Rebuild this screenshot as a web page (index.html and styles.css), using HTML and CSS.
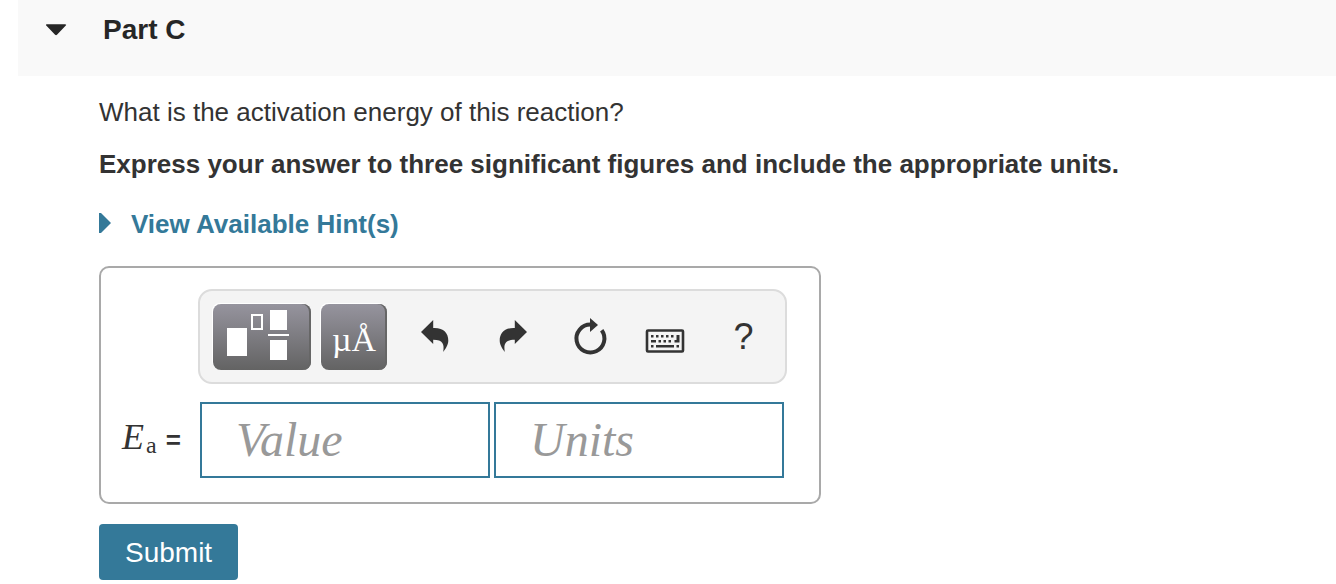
FILE: index.html
```html
<!DOCTYPE html>
<html lang="en">
<head>
    <meta charset="UTF-8">
    <meta name="viewport" content="width=device-width, initial-scale=1.0">
    <title>Part C</title>
    <link rel="stylesheet" href="styles.css">
</head>
<body>
    <header class="part-header">
        <svg class="arrow-down" viewBox="0 0 22 12" aria-hidden="true"><path d="M1 0H20Q22 0 20.500 1.500L11.500 11Q10.500 12 9.500 11L.5 1.500Q-1 0 1 0Z"/></svg>
        <h2>Part C</h2>
    </header>
    <main class="content">
        <p class="question">What is the activation energy of this reaction?</p>
        <p class="instructions">Express your answer to three significant figures and include the appropriate units.</p>
        <a class="hints" href="#">
            <svg class="arrow-right" viewBox="0 0 12 20" aria-hidden="true"><path d="M0 0H2L12 10L2 20H0Z"/></svg>
            View Available Hint(s)
        </a>

        <form id="answerForm">
            <div class="answer-box">
                <div class="toolbar">
                    <button type="button" class="tool template" aria-label="Templates">
                        <svg viewBox="0 0 98 66">
                            <path fill="#fff" d="M14 24H34V52H14ZM57 6H74V26H57ZM57 36H74V56H57ZM55 30H76V32H55Z"/>
                            <rect x="39" y="11" width="10" height="14" fill="none" stroke="#fff" stroke-width="2"/>
                        </svg>
                    </button>
                    <button type="button" class="tool symbols" aria-label="Symbols">µÅ</button>
                    <div class="icons">
                        <button type="button" class="icon" aria-label="Undo">
                            <svg viewBox="0 0 76 66"><path d="M23.500 28L35.700 16V24C46 23.500 50.800 29 50.800 36.500C50.800 41 48 45 45.700 48C47 40 45.500 35.700 35.700 35.700V40Z"/></svg>
                        </button>
                        <button type="button" class="icon" aria-label="Redo">
                            <svg viewBox="0 0 76 66"><path d="M52.500 28L40.300 16V24C30 23.500 25.200 29 25.200 36.500C25.200 41 28 45 30.300 48C29 40 30.500 35.700 40.300 35.700V40Z"/></svg>
                        </button>
                        <button type="button" class="icon" aria-label="Reset">
                            <svg viewBox="0 0 76 66">
                                <path d="M50.200 26.200A14 14 0 1 1 39 20.500" fill="none" stroke="#333" stroke-width="4"/>
                                <path d="M38.500 14L46.500 21L38.500 28Z"/>
                            </svg>
                        </button>
                        <button type="button" class="icon" aria-label="Keyboard">
                            <svg viewBox="0 0 76 66">
                                <rect x="18.500" y="26.500" width="36" height="21" rx="1" fill="none" stroke="#333" stroke-width="2.600"/>
                                <path d="M22.500 31h2.500v2.500h-2.500zM27.500 31h2.500v2.500h-2.500zM32.500 31h2.500v2.500h-2.500zM37.500 31h2.500v2.500h-2.500zM42.500 31h2.500v2.500h-2.500zM48 31h3v7.500h-5v-2.500h2zM22.500 36h5v2.500h-5zM30 36h2.500v2.500h-2.500zM35 36h2.500v2.500h-2.500zM40 36h2.500v2.500h-2.500zM22.500 41h2.500v2.500h-2.500zM27.500 41h18v2.500h-18zM48 41h2.500v2.500h-2.500z"/>
                            </svg>
                        </button>
                        <button type="button" class="icon help" aria-label="Help">?</button>
                    </div>
                </div>
                <label class="symbol" for="value"><i>E</i><sub>a</sub> <span>=</span></label>
                <div class="fields">
                    <input type="text" id="value" name="value" placeholder="Value">
                    <input type="text" id="units" name="units" placeholder="Units" aria-label="Units">
                </div>
            </div>
            <button type="submit" class="submit">Submit</button>
        </form>
    </main>
</body>
</html>
```

FILE: styles.css
```css
* {
    box-sizing: border-box;
}

body {
    font-family: "Liberation Sans", Arial, sans-serif;
    font-size: 26px;
    line-height: 32px;
    color: #333;
    background-color: #fff;
    margin: 0;
}

.part-header {
    display: flex;
    align-items: flex-start;
    gap: 36px;
    margin-left: 18px;
    padding: 14px 28px 30px;
    background-color: #f9f9f9;
    color: #262626;
}

.part-header h2 {
    margin: 0;
    font-size: 28px;
}

.arrow-down {
    width: 21px;
    height: 12px;
    margin-top: 10px;
    fill: #262626;
}

.content {
    padding: 20px 99px 4px;
}

.question,
.instructions {
    margin: 0 0 20px;
}

.instructions {
    font-weight: bold;
}

.hints {
    display: flex;
    align-items: center;
    gap: 20px;
    width: fit-content;
    margin-top: 28px;
    color: #347999;
    font-weight: bold;
    text-decoration: none;
}

.arrow-right {
    width: 12px;
    height: 20px;
    margin-bottom: 2px;
    fill: #347999;
}

.answer-box {
    display: grid;
    grid-template-columns: 76px minmax(0, 1fr);
    row-gap: 18px;
    align-items: center;
    max-width: 722px;
    margin: 26px 0 20px;
    padding: 21px 32px 24px 21px;
    border: 2px solid #a9a9a9;
    border-radius: 10px;
}

.toolbar {
    grid-column: 2;
    display: flex;
    gap: 10px;
    padding: 13px 0 12px 13px;
    border: 2px solid #dcdcdc;
    border-radius: 14px;
    background-color: #f4f4f4;
}

.toolbar button {
    flex: none;
    height: 66px;
    padding: 0;
    border: none;
    cursor: pointer;
}

.toolbar svg {
    display: block;
    width: 100%;
    height: 66px;
}

.tool {
    border-radius: 8px;
    background: linear-gradient(#96949e, #636363);
    box-shadow: -1px -1px 0 #fff, inset -2px 0 0 #666;
    color: #fff;
}

.template {
    width: 98px;
}

.toolbar .symbols {
    width: 66px;
    padding-top: 6px;
    font-family: "Liberation Serif", "Times New Roman", serif;
    font-size: 34px;
}

.icons {
    display: flex;
}

.icon {
    width: 77px;
    background: none;
    color: #333;
    fill: #333;
}

.help {
    font-family: "Liberation Sans", Arial, sans-serif;
    font-size: 36px;
}

.symbol {
    padding-bottom: 4px;
    font-family: "Liberation Serif", "Times New Roman", serif;
    font-size: 36px;
    white-space: nowrap;
}

.symbol sub {
    margin-left: 2px;
    font-size: 24px;
    line-height: 0;
    vertical-align: -4px;
}

.symbol span {
    font-family: "Liberation Sans", Arial, sans-serif;
    font-size: 26px;
    font-weight: bold;
}

.fields {
    display: flex;
    gap: 4px;
    padding-left: 2px;
    padding-right: 3px;
}

.fields input {
    flex: 1;
    min-width: 0;
    height: 76px;
    padding: 0 34px 2px;
    border: 2px solid #347999;
    font-family: "Liberation Serif", "Times New Roman", serif;
    font-size: 48px;
}

.fields input::placeholder {
    color: #999;
    font-style: italic;
}

.submit {
    height: 56px;
    padding: 2px 26px 0;
    border: none;
    border-radius: 4px;
    background-color: #347999;
    color: #fff;
    font-family: "Liberation Sans", Arial, sans-serif;
    font-size: 28px;
    cursor: pointer;
}
```
